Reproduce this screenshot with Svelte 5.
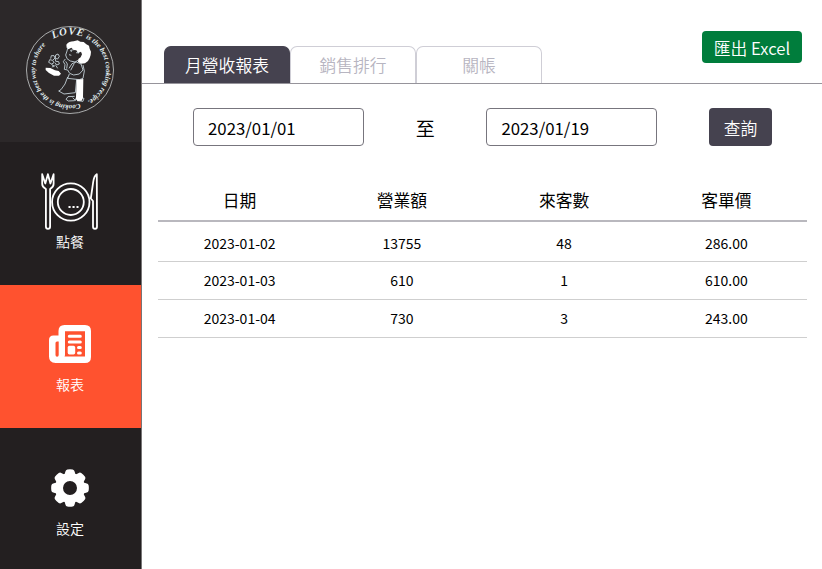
<script>
  const tabs = ['月營收報表', '銷售排行', '關帳'];
  let active = $state(0);
  let from = $state('2023/01/01');
  let to = $state('2023/01/19');
  const heads = ['日期', '營業額', '來客數', '客單價'];
  const rows = [
    ['2023-01-02', '13755', '48', '286.00'],
    ['2023-01-03', '610', '1', '610.00'],
    ['2023-01-04', '730', '3', '243.00']
  ];
</script>

<div class="app">
  <aside>
    <div class="logo">
      <svg width="88" height="88" viewBox="78 78 264 264">
        <defs>
          <path id="ring-left" d="M240 311 A105 105 0 0 1 152 123" />
          <path id="ring-top" d="M160 117 A104 104 0 0 1 275 126" />
          <path id="ring-right" d="M257 115 A105 105 0 0 1 240 312" />
        </defs>
        <circle cx="210" cy="210" r="130.5" fill="none" stroke="#d9dddd" stroke-width="2.2" />
        <g class="ring">
          <text font-size="21"><textPath href="#ring-left">Cooking is the best way to share</textPath></text>
          <text font-size="32" letter-spacing="2"><textPath href="#ring-top">LOVE</textPath></text>
          <text font-size="22"><textPath href="#ring-right">is the best cooking recipe.</textPath></text>
        </g>
        <path fill="#fff" d="M199 134q8-10 22-10l12-3 8 4 10 1 8 7 8 4 2 9 4 9-1 10-3 9-5 9-9 7-12 1-9-5 1-9 7-5 4-9-3-8-9 4-5-8-8-1-7-7-9 5-5-5z" />
        <g fill="none" stroke="#d5e5ec" stroke-width="2.4" stroke-linejoin="round">
          <path d="M204 141l-3 12-4 12 4 11 10 7 14 3 9-5M211 151l11-2M228 158l9 1M213 150l1 6M207 164l7 2M232 154l4 5" />
          <path d="M196 177l-6 8 5 9-2 14 10 2 6 10 12 5 17-3 11-12-6-18-14-6-13 5-9 14M197 184l5 8-2 14M223 190l-11 21M249 195l4 18-4 22-11 4-35-4 5-13" />
          <path d="M203 231l-8 21-12 17-7 4 16 9 34-4 4-40" />
          <path d="M155 192l-9-5 3-8 9 2 4 7-7 4 6 8 6-5M152 176l2-9 8 0 3 7-6 6M166 174l1-9 7-3 4 7-5 8-7-2 1 9 9 1 2 7-8 3-5-7M168 197l5 8M161 195l-4 7" />
          <path d="M224 289l-20 1-6 8 7 5 19-1 6-8M218 293l9 9M231 302l18 2 3-9-17-3" />
        </g>
        <path fill="#fff" d="M137 203l14 1 14 7 11 2 7 8-6 6-15 0-15-8-10-9zM230 239l20-2-1 56-4 9-12 1-6-6 1-6z" />
      </svg>
    </div>
    <a class="item" href="#order">
      <svg class="dish" width="58" height="58" viewBox="0 0 58 58" fill="none" stroke="#fff" stroke-width="1.8" stroke-linejoin="round">
        <circle cx="29.8" cy="29" r="18.7" />
        <circle cx="29.8" cy="29" r="13" />
        <path d="M1.200 1.2V11q0 3 3.700 5V53.5q0 2.3 2.1 2.3T9.100 53.5V16q3.500-2 3.500-5V1.2L9.400 10.500 6.900 1.2 4.300 10.500z" />
        <path d="M55.8 1.2Q53 3 52.2 9L49.8 25.5 52 28V53.5q0 2.3 2 2.3t2-2.3z" />
        <path stroke-width="2" d="M27.500 34h2.100M31.500 34h2.100M35.500 34h2" />
      </svg>
      <span>點餐</span>
    </a>
    <a class="item on" href="#report">
      <svg class="news" width="42" height="38" viewBox="0 0 42 38">
        <path fill="#fff" d="M15.5 0H36q6 0 6 6V32q0 6-6 6H6.5Q0 38 0 31.500V15q0-4.500 4.500-4.500H9.500V6q0-6 6-6z" />
        <path fill="#ff522f" d="M16 6.200h20v25.300H15.500q.5-.7.500-2zM6.500 18q0-1.500 1.500-1.500h1.700V30q0 1.700-1.600 1.700T6.500 30z" />
        <path fill="none" stroke="#fff" stroke-width="3" stroke-linecap="round" d="M20.300 11.200H31.300M20.300 17H31.300M29.500 22.400h1.800M29.500 28h1.800" />
        <rect x="18.700" y="20.800" width="7.500" height="8.700" rx="1.700" fill="#fff" />
      </svg>
      <span>報表</span>
    </a>
    <a class="item" href="#setting">
      <svg class="gear" width="38" height="38" viewBox="0 0 38 38">
        <g fill="#fff">
          {#each [0, 45, 90, 135, 180, 225, 270, 315] as a}
            <path transform={`rotate(${a} 19 19)`} d="M12.800 8 L14.500 2.200Q14.800 .8 16.300.4 19-.1 21.700.4 23.200.8 23.500 2.200L25.200 8z" />
          {/each}
        </g>
        <circle cx="19" cy="19" r="11" fill="none" stroke="#fff" stroke-width="8" />
      </svg>
      <span>設定</span>
    </a>
  </aside>

  <main>
    <header>
      <nav>
        {#each tabs as t, i}
          <button class="tab" class:active={active === i} onclick={() => (active = i)}>{t}</button>
        {/each}
      </nav>
      <button class="excel">匯出 Excel</button>
    </header>
    <form class="filter" onsubmit={(e) => e.preventDefault()}>
      <input bind:value={from} aria-label="開始日期" />
      <span>至</span>
      <input bind:value={to} aria-label="結束日期" />
      <button class="query">查詢</button>
    </form>
    <table>
      <thead>
        <tr>{#each heads as h}<th>{h}</th>{/each}</tr>
      </thead>
      <tbody>
        {#each rows as r}
          <tr>{#each r as c}<td>{c}</td>{/each}</tr>
        {/each}
      </tbody>
    </table>
  </main>
</div>

<style>
  :global(body) { background: #fff; }
  .app, button, input { font-family: "Noto Sans CJK TC", sans-serif; }
  .app { display: flex; width: 822px; height: 569px; overflow: hidden; color: #000; }
  button, input { box-sizing: border-box; margin: 0; padding: 0; border: 0; }
  aside { width: 142px; box-sizing: border-box; flex: none; display: flex; flex-direction: column; background: #231f20; border-right: 1px solid #777576; }
  .logo { height: 141.500px; flex: none; box-sizing: border-box; padding: 26px 0 0 26px; background: #2c2829; }
  .logo svg { display: block; }
  .ring text { font-family: "Liberation Serif", serif; font-style: italic; font-weight: 700; fill: #e4f0f3; }
  .item { height: 143.400px; flex: none; box-sizing: border-box; display: flex; flex-direction: column; align-items: center; padding-right: 1px; color: #fff; font-size: 14px; font-weight: 350; line-height: 20px; text-decoration: none; }
  .on { background: #ff522f; }
  .item svg { flex: none; }
  .dish { margin: 31px 0 0.500px; }
  .news { margin: 40.500px 0 11px; }
  .gear { margin: 40.500px 0 11px; }
  main { flex: 1; min-width: 0; }
  header { height: 84px; box-sizing: border-box; display: flex; justify-content: space-between; padding: 0 20px 0 22px; border-bottom: 1px solid #96949b; }
  nav { display: flex; align-self: flex-end; }
  .tab { width: 126px; height: 37px; border: 1px solid #cfced6; border-bottom: 0; border-radius: 7px 7px 0 0; background: #fff; color: #b7b5c1; font-size: 16.800px; font-weight: 350; line-height: 36px; }
  .tab.active { background: #45424f; color: #fff; border-color: #45424f; }
  .excel { width: 100px; height: 32px; margin-top: 31px; padding-top: 2px; border-radius: 4px; background: #007d3c; color: #fff; font-size: 16.800px; font-weight: 350; }
  .filter { height: 38px; display: flex; align-items: center; padding: 24px 0 0 51px; }
  input { width: 171px; height: 38px; border: 1px solid #77757d; border-radius: 4px; padding: 2px 14px 0; font-size: 16.800px; color: #000; background: #fff; }
  .filter span { width: 122.400px; text-align: center; font-size: 19px; line-height: 38px; padding-top: 1px; }
  .query { width: 63px; height: 38px; margin-left: 51.600px; padding-top: 2px; border-radius: 4px; background: #45424f; color: #fff; font-size: 16.800px; font-weight: 350; }
  table { width: 649px; margin: 35px 0 0 16px; border-collapse: separate; border-spacing: 0; table-layout: fixed; text-align: center; }
  th, td { padding: 0 0 0 1px; box-sizing: border-box; }
  th { height: 41px; font-weight: 400; font-size: 16.800px; line-height: 36px; padding-bottom: 2px; border-bottom: 2px solid #b9b8be; }
  td { height: 38px; font-size: 14px; line-height: 34px; padding-bottom: 2px; border-bottom: 1px solid #cfcfcf; }
  tbody tr:first-child td { height: 40px; padding-top: 4px; padding-bottom: 1px; }
</style>
